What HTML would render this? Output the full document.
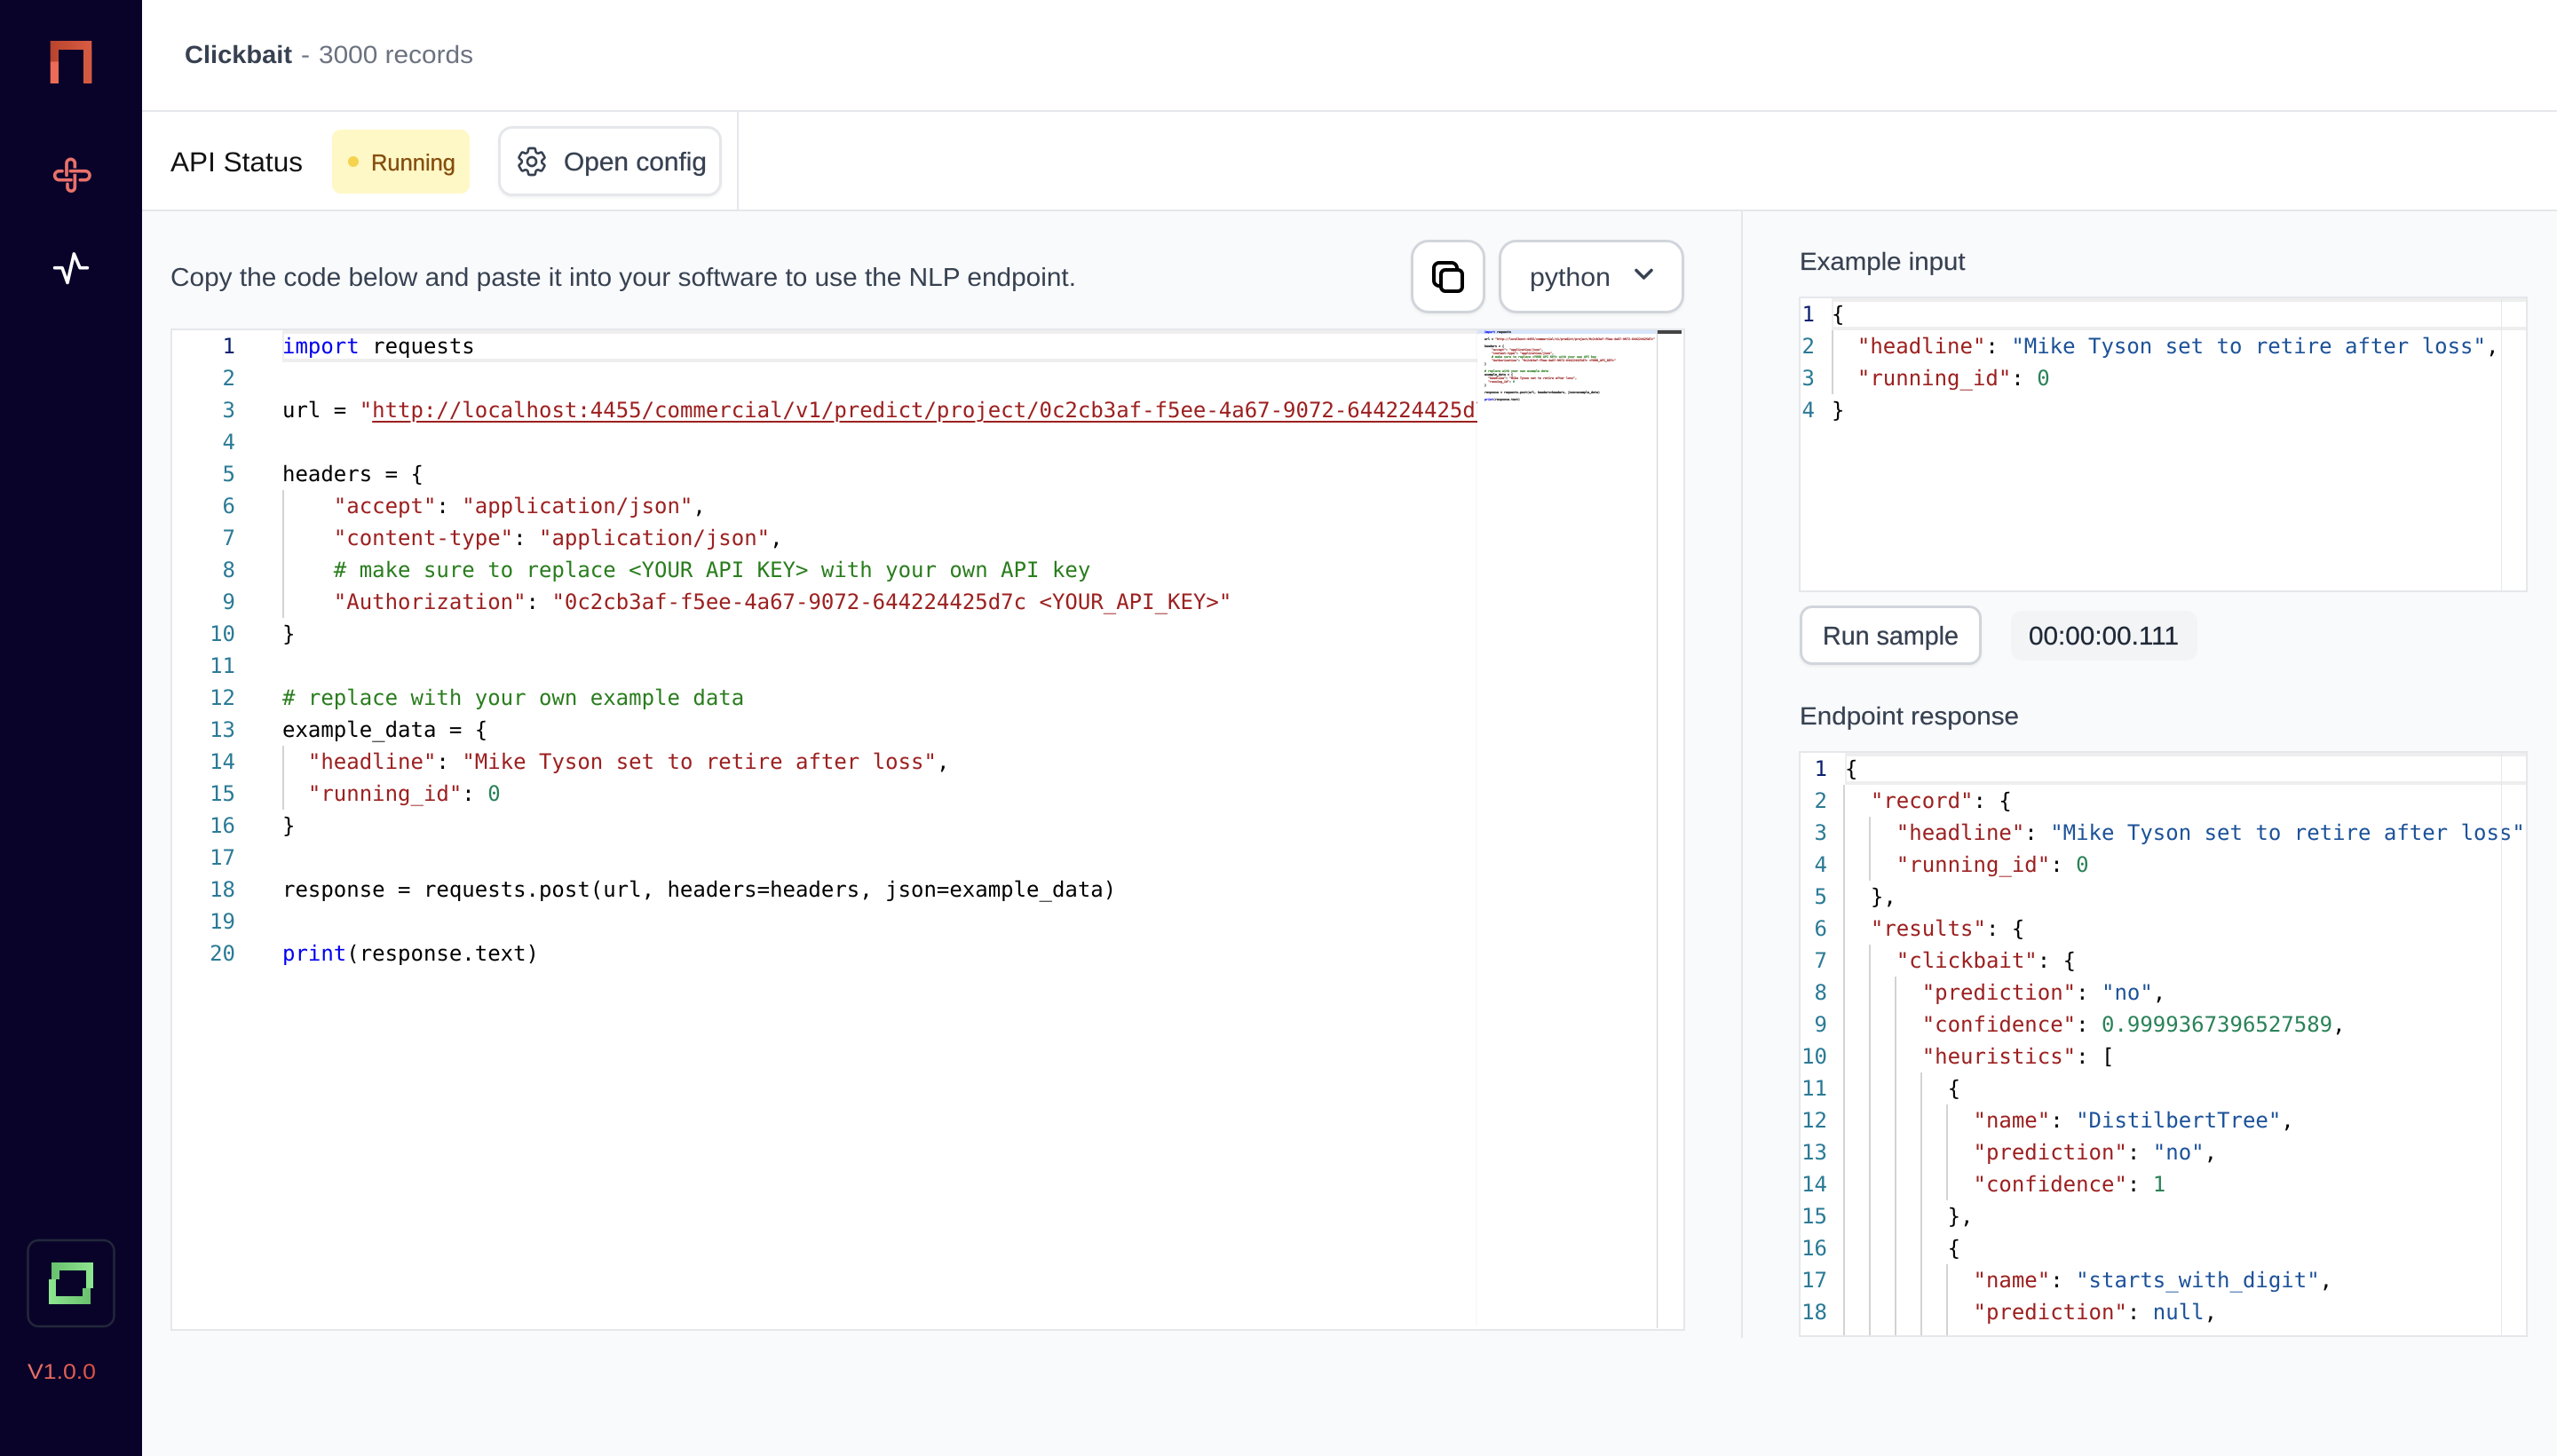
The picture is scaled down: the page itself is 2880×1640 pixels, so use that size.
<!DOCTYPE html>
<html><head><meta charset="utf-8"><title>Clickbait</title>
<style>
*{box-sizing:border-box;margin:0;padding:0}
html,body{width:2880px;height:1640px;overflow:hidden;background:#f9fafc;font-family:"Liberation Sans",sans-serif;text-rendering:geometricPrecision}
.a{position:absolute}
.b{position:absolute;background:#fff}
.code,.nums{position:absolute;font-family:"DejaVu Sans Mono","Liberation Mono",monospace;font-size:24px;line-height:36px;overflow:hidden;white-space:pre;font-variant-ligatures:none}
.code div,.nums div{height:36px}
.nums{text-align:right;color:#2b7a96}
.nums div:first-child{color:#0b216f}
.code{color:#000}
.s{color:#9c2020}.v{color:#1c5299}.n{color:#2a8258}.c{color:#2a7d1e}.k{color:#0000f0}
.u{text-decoration:underline;text-decoration-thickness:2px;text-underline-offset:4px}
.hl{position:absolute;border:solid #eee;border-width:4px 0 4px 2px;background:#fff}
.g{position:absolute;width:2px;background:#d3d3d3}
.mini{position:absolute;left:1672px;top:372px;width:1400px;font-family:"DejaVu Sans Mono",monospace;font-size:24px;line-height:28.9px;font-weight:bold;white-space:pre;transform:scale(.1384);transform-origin:0 0;color:#000;-webkit-text-stroke:1px currentColor}
.mini div{height:28.9px}
svg.t{position:absolute;left:0;top:0}
svg.t text{font-family:"Liberation Sans",sans-serif}
</style></head><body>

<div class="a" style="left:0;top:0;width:160px;height:1640px;background:#09032a"></div>
<div class="b" style="left:160px;top:0;width:2720px;height:124px"></div>
<div class="a" style="left:160px;top:124px;width:2720px;height:2px;background:#e5e7eb"></div>
<div class="b" style="left:160px;top:126px;width:2720px;height:110px"></div>
<div class="a" style="left:160px;top:236px;width:2720px;height:2px;background:#e5e7eb"></div>
<div class="a" style="left:830px;top:126px;width:2px;height:110px;background:#e5e7eb"></div>
<div class="a" style="left:1961px;top:236px;width:2px;height:1271px;background:#e5e7eb"></div>

<div class="a" style="left:374px;top:146px;width:155px;height:72px;background:#fef8c6;border-radius:10px"></div>
<div class="a" style="left:392px;top:176px;width:12px;height:12px;background:#f5d34f;border-radius:50%"></div>
<div class="b" style="left:561px;top:142px;width:252px;height:79px;border:3px solid #e5e7eb;border-radius:16px;box-shadow:0 2px 3px rgba(0,0,0,.05)"></div>

<div class="b" style="left:1589px;top:270px;width:84px;height:83px;border:3px solid #d1d5db;border-radius:20px;box-shadow:0 2px 3px rgba(0,0,0,.05)"></div>
<div class="b" style="left:1688px;top:270px;width:209px;height:83px;border:3px solid #d1d5db;border-radius:20px;box-shadow:0 2px 3px rgba(0,0,0,.05)"></div>

<!-- main editor -->
<div class="b" style="left:192px;top:370px;width:1706px;height:1129px;border:2px solid #e5e7eb"></div>
<div class="hl" style="left:318px;top:372px;width:1346px;height:36px"></div>
<div class="g" style="left:318px;top:552px;height:144px"></div>
<div class="g" style="left:318px;top:840px;height:72px"></div>
<div class="nums" style="left:194px;top:372px;width:71px;height:756px"><div>1</div><div>2</div><div>3</div><div>4</div><div>5</div><div>6</div><div>7</div><div>8</div><div>9</div><div>10</div><div>11</div><div>12</div><div>13</div><div>14</div><div>15</div><div>16</div><div>17</div><div>18</div><div>19</div><div>20</div></div>
<div class="code" style="left:318px;top:372px;width:1346px;height:1124px"><div><span class="k">import</span> requests</div><div> </div><div>url = <span class="s">"<span class="u">http://localhost:4455/commercial/v1/predict/project/0c2cb3af-f5ee-4a67-9072-644224425d7c</span>"</span></div><div> </div><div>headers = {</div><div>    <span class="s">"accept"</span>: <span class="s">"application/json"</span>,</div><div>    <span class="s">"content-type"</span>: <span class="s">"application/json"</span>,</div><div>    <span class="c"># make sure to replace &lt;YOUR API KEY&gt; with your own API key</span></div><div>    <span class="s">"Authorization"</span>: <span class="s">"0c2cb3af-f5ee-4a67-9072-644224425d7c &lt;YOUR_API_KEY&gt;"</span></div><div>}</div><div> </div><div><span class="c"># replace with your own example data</span></div><div>example_data = {</div><div>  <span class="s">"headline"</span>: <span class="s">"Mike Tyson set to retire after loss"</span>,</div><div>  <span class="s">"running_id"</span>: <span class="n">0</span></div><div>}</div><div> </div><div>response = requests.post(url, headers=headers, json=example_data)</div><div> </div><div><span class="k">print</span>(response.text)</div></div>

<!-- minimap -->
<div class="b" style="left:1664px;top:372px;width:232px;height:1124px;box-shadow:-2px 0 3px -2px rgba(0,0,0,.08)"></div>
<div class="a" style="left:1664px;top:372px;width:202px;height:4px;background:#d7e5fb"></div>
<div class="a" style="left:1866px;top:372px;width:1px;height:1124px;background:#cfcfcf"></div>
<div class="a" style="left:1867px;top:372px;width:27px;height:4px;background:#444"></div>
<div class="mini"><div><span class="k">import</span> requests</div><div> </div><div>url = <span class="s">"http://localhost:4455/commercial/v1/predict/project/0c2cb3af-f5ee-4a67-9072-644224425d7c"</span></div><div> </div><div>headers = {</div><div>    <span class="s">"accept"</span>: <span class="s">"application/json"</span>,</div><div>    <span class="s">"content-type"</span>: <span class="s">"application/json"</span>,</div><div>    <span class="c"># make sure to replace &lt;YOUR API KEY&gt; with your own API key</span></div><div>    <span class="s">"Authorization"</span>: <span class="s">"0c2cb3af-f5ee-4a67-9072-644224425d7c &lt;YOUR_API_KEY&gt;"</span></div><div>}</div><div> </div><div><span class="c"># replace with your own example data</span></div><div>example_data = {</div><div>  <span class="s">"headline"</span>: <span class="s">"Mike Tyson set to retire after loss"</span>,</div><div>  <span class="s">"running_id"</span>: <span class="n">0</span></div><div>}</div><div> </div><div>response = requests.post(url, headers=headers, json=example_data)</div><div> </div><div><span class="k">print</span>(response.text)</div></div>

<!-- example input -->
<div class="b" style="left:2026px;top:334px;width:821px;height:333px;border:2px solid #e5e7eb"></div>
<div class="hl" style="left:2063px;top:336px;width:782px;height:36px"></div>
<div class="g" style="left:2063px;top:372px;height:72px"></div>
<div class="nums" style="left:2029px;top:336px;width:15px;height:144px"><div>1</div><div>2</div><div>3</div><div>4</div></div>
<div class="code" style="left:2063px;top:336px;width:782px;height:329px"><div>{</div><div>  <span class="s">"headline"</span>: <span class="v">"Mike Tyson set to retire after loss"</span>,</div><div>  <span class="s">"running_id"</span>: <span class="n">0</span></div><div>}</div></div>
<div class="a" style="left:2817px;top:336px;width:1px;height:329px;background:#e5e7eb"></div>

<div class="b" style="left:2027px;top:682px;width:205px;height:67px;border:3px solid #d1d5db;border-radius:14px;box-shadow:0 2px 3px rgba(0,0,0,.05)"></div>
<div class="a" style="left:2265px;top:688px;width:210px;height:56px;background:#f3f4f6;border-radius:12px"></div>

<!-- response -->
<div class="b" style="left:2026px;top:846px;width:821px;height:660px;border:2px solid #e5e7eb"></div>
<div class="hl" style="left:2078px;top:848px;width:767px;height:36px"></div>
<div class="g" style="left:2076px;top:884px;height:620px"></div>
<div class="g" style="left:2105px;top:920px;height:72px"></div>
<div class="g" style="left:2105px;top:1064px;height:440px"></div>
<div class="g" style="left:2134px;top:1100px;height:404px"></div>
<div class="g" style="left:2163px;top:1208px;height:296px"></div>
<div class="g" style="left:2192px;top:1244px;height:108px"></div>
<div class="g" style="left:2192px;top:1424px;height:80px"></div>
<div class="nums" style="left:2029px;top:848px;width:29px;height:656px"><div>1</div><div>2</div><div>3</div><div>4</div><div>5</div><div>6</div><div>7</div><div>8</div><div>9</div><div>10</div><div>11</div><div>12</div><div>13</div><div>14</div><div>15</div><div>16</div><div>17</div><div>18</div><div>19</div></div>
<div class="code" style="left:2078px;top:848px;width:767px;height:655px"><div>{</div><div>  <span class="s">"record"</span>: {</div><div>    <span class="s">"headline"</span>: <span class="v">"Mike Tyson set to retire after loss"</span>,</div><div>    <span class="s">"running_id"</span>: <span class="n">0</span></div><div>  },</div><div>  <span class="s">"results"</span>: {</div><div>    <span class="s">"clickbait"</span>: {</div><div>      <span class="s">"prediction"</span>: <span class="v">"no"</span>,</div><div>      <span class="s">"confidence"</span>: <span class="n">0.9999367396527589</span>,</div><div>      <span class="s">"heuristics"</span>: [</div><div>        {</div><div>          <span class="s">"name"</span>: <span class="v">"DistilbertTree"</span>,</div><div>          <span class="s">"prediction"</span>: <span class="v">"no"</span>,</div><div>          <span class="s">"confidence"</span>: <span class="n">1</span></div><div>        },</div><div>        {</div><div>          <span class="s">"name"</span>: <span class="v">"starts_with_digit"</span>,</div><div>          <span class="s">"prediction"</span>: <span class="v">null</span>,</div><div>          <span class="s">"confidence"</span>: <span class="v">null</span></div></div>
<div class="a" style="left:2817px;top:848px;width:1px;height:656px;background:#e5e7eb"></div>

<svg class="t" width="2880" height="1640" viewBox="0 0 2880 1640" xmlns="http://www.w3.org/2000/svg">
<defs>
<linearGradient id="lt" x1="0" x2="1" y1="0" y2="0"><stop offset="0" stop-color="#b8442d"/><stop offset="1" stop-color="#d95c43"/></linearGradient>
<linearGradient id="g1" x1="0" x2="1" y1="0" y2="0"><stop offset="0" stop-color="#69c06d"/><stop offset="1" stop-color="#8ee690"/></linearGradient>
<linearGradient id="g2" x1="0" x2="1" y1="0" y2="0"><stop offset="0" stop-color="#8ee690"/><stop offset="1" stop-color="#69c06d"/></linearGradient>
<linearGradient id="vg" x1="0" x2="1" y1="0" y2="0"><stop offset="0" stop-color="#e9736a"/><stop offset="1" stop-color="#d94f41"/></linearGradient>
</defs>
<!-- logo -->
<path d="M56.7 46H103.3V94H94V56H66V69.5H56.7Z" fill="url(#lt)"/>
<rect x="56.7" y="69.5" width="9.3" height="24.5" fill="#ec6c56"/>
<rect x="94" y="56" width="9.3" height="38" fill="#d35a41"/>
<!-- knot -->
<g transform="translate(40,160) scale(.3333)" fill="none" stroke="#e8716a" stroke-width="11" stroke-linecap="round">
<path d="M120 128H80A15 15 0 0 1 80 98H90"/>
<path d="M105 112V72A14 14 0 0 1 133 72V153A12.5 12.5 0 0 1 108 153V142"/>
<path d="M122 98H145" stroke="#09032a" stroke-width="19" stroke-linecap="butt"/>
<path d="M118 98H168A15 15 0 0 1 168 128H151"/>
</g>
<!-- activity -->
<g transform="translate(40,270) scale(.3333)" fill="none" stroke="#fff" stroke-width="11" stroke-linecap="round" stroke-linejoin="round">
<path d="M65 95H90L108 145L130 48L150 95H175"/>
</g>
<!-- bottom logo -->
<rect x="31.5" y="1397" width="97" height="97" rx="12" fill="none" stroke="#22283a" stroke-width="2.5"/>
<path d="M58 1422H105V1451H97V1431H67V1441H58Z" fill="url(#g1)"/>
<path d="M55 1441H63V1460H93V1451H102V1469H55Z" fill="url(#g2)"/>
<text x="31" y="1553" font-size="24" textLength="77" lengthAdjust="spacingAndGlyphs" fill="url(#vg)">V1.0.0</text>

<text x="208" y="71" font-size="28" font-weight="bold" fill="#374151" textLength="121" lengthAdjust="spacingAndGlyphs">Clickbait</text>
<text x="339" y="71" font-size="28" fill="#6b7280" textLength="10" lengthAdjust="spacingAndGlyphs">-</text>
<text x="359" y="71" font-size="28" fill="#6b7280" textLength="174" lengthAdjust="spacingAndGlyphs">3000 records</text>

<text x="192" y="193" font-size="31" fill="#111" textLength="149" lengthAdjust="spacingAndGlyphs">API Status</text>
<text x="418" y="192" font-size="26" fill="#854d0e" stroke="#854d0e" stroke-width=".35" textLength="95" lengthAdjust="spacingAndGlyphs">Running</text>
<g transform="translate(579,162) scale(1.6667)" fill="none" stroke="#374151" stroke-width="1.6" stroke-linejoin="round">
<path d="M9.594 3.94c.09-.542.56-.94 1.11-.94h2.593c.55 0 1.02.398 1.11.94l.213 1.281c.063.374.313.686.645.87.074.04.147.083.22.127.324.196.72.257 1.075.124l1.217-.456a1.125 1.125 0 011.37.49l1.296 2.247a1.125 1.125 0 01-.26 1.431l-1.003.827c-.293.24-.438.613-.431.992a6.759 6.759 0 010 .255c-.007.378.138.75.43.99l1.005.828c.424.35.534.954.26 1.43l-1.298 2.247a1.125 1.125 0 01-1.369.491l-1.217-.456c-.355-.133-.75-.072-1.076.124a6.57 6.57 0 01-.22.128c-.331.183-.581.495-.644.869l-.213 1.28c-.09.543-.56.941-1.11.941h-2.594c-.55 0-1.02-.398-1.11-.94l-.213-1.281c-.062-.374-.312-.686-.644-.87a6.52 6.52 0 01-.22-.127c-.325-.196-.72-.257-1.076-.124l-1.217.456a1.125 1.125 0 01-1.369-.49l-1.297-2.247a1.125 1.125 0 01.26-1.431l1.004-.827c.292-.24.437-.613.43-.992a6.932 6.932 0 010-.255c.007-.378-.138-.75-.43-.99l-1.004-.828a1.125 1.125 0 01-.26-1.43l1.297-2.247a1.125 1.125 0 011.37-.491l1.216.456c.356.133.751.072 1.076-.124.072-.044.146-.087.22-.128.332-.183.582-.495.644-.869l.214-1.281z"/>
<path d="M15 12a3 3 0 11-6 0 3 3 0 016 0z"/>
</g>
<text x="635" y="192" font-size="29" fill="#374151" stroke="#374151" stroke-width=".3" textLength="161" lengthAdjust="spacingAndGlyphs">Open config</text>

<text x="192" y="322" font-size="29" fill="#374151" textLength="1020" lengthAdjust="spacingAndGlyphs">Copy the code below and paste it into your software to use the NLP endpoint.</text>

<!-- copy icon -->
<rect x="1615" y="296" width="26" height="26" rx="6" fill="#fff" stroke="#000" stroke-width="4"/>
<rect x="1623" y="304" width="24" height="24" rx="5" fill="#fff" stroke="#000" stroke-width="4"/>
<text x="1723" y="322" font-size="29" fill="#374151" textLength="91" lengthAdjust="spacingAndGlyphs">python</text>
<path d="M1843 304.5L1851.5 313L1860 304.5" fill="none" stroke="#374151" stroke-width="3.5" stroke-linecap="round" stroke-linejoin="round"/>

<text x="2027" y="304" font-size="28" fill="#374151" stroke="#374151" stroke-width=".2" textLength="186.5" lengthAdjust="spacingAndGlyphs">Example input</text>
<text x="2053" y="726" font-size="29" fill="#374151" stroke="#374151" stroke-width=".3" textLength="153" lengthAdjust="spacingAndGlyphs">Run sample</text>
<text x="2285" y="726" font-size="29" fill="#1f2937" stroke="#1f2937" stroke-width=".3" textLength="169" lengthAdjust="spacingAndGlyphs">00:00:00.111</text>
<text x="2027" y="816" font-size="28" fill="#374151" stroke="#374151" stroke-width=".2" textLength="247" lengthAdjust="spacingAndGlyphs">Endpoint response</text>
</svg>
</body></html>
